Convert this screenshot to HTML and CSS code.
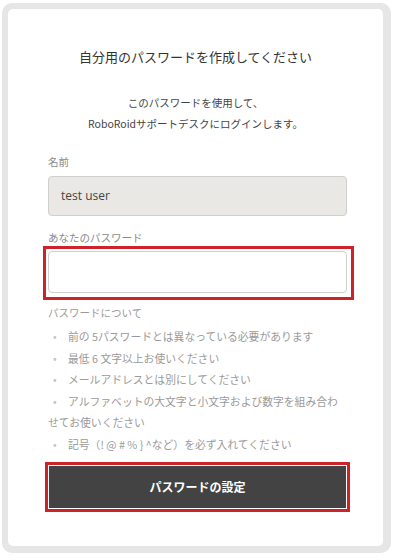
FILE: index.html
```html
<!DOCTYPE html>
<html lang="ja">
<head>
<meta charset="utf-8">
<link rel="stylesheet" href="styles.css">
</head>
<body>
<div class="frame">
  <div class="card">
    <h1 class="title">自分用のパスワードを作成してください</h1>
    <p class="lead">このパスワードを使用して、<br>RoboRoidサポートデスクにログインします。</p>
    <div class="form">
      <label class="label label-name">名前</label>
      <div class="input input-disabled">test user</div>
      <label class="label label-pass">あなたのパスワード</label>
      <div class="mark mark-input">
        <div class="input"></div>
      </div>
      <div class="label label-about">パスワードについて</div>
      <ul class="rules">
        <li>前の 5パスワードとは異なっている必要があります</li>
        <li>最低 6 文字以上お使いください</li>
        <li>メールアドレスとは別にしてください</li>
        <li>アルファベットの大文字と小文字および数字を組み合わせてお使いください</li>
        <li>記号（! @ # % } ^など）を必ず入れてください</li>
      </ul>
      <div class="mark mark-button">
        <button class="submit">パスワードの設定</button>
      </div>
    </div>
  </div>
</div>
</body>
</html>
```

FILE: styles.css
```css
html, body {
  margin: 0;
  padding: 0;
  background: #ffffff;
}
body {
  font-family: "Noto Sans CJK JP", "Noto Sans", sans-serif;
  width: 396px;
  height: 558px;
  overflow: hidden;
}
.frame {
  margin: 3px 0 0 2px;
  width: 389px;
  height: 550px;
  box-sizing: border-box;
  border: 6px solid #e6e6e6;
  border-right-width: 8px;
  border-bottom-width: 7px;
  border-radius: 10px;
  background: #e6e6e6;
}
.card {
  background: #ffffff;
  height: 100%;
  border-radius: 5px;
  box-sizing: border-box;
  padding: 38px 0 0 0;
}
.title {
  margin: 0;
  font-size: 13px;
  line-height: 20px;
  font-weight: normal;
  color: #333333;
  text-align: center;
}
.lead {
  margin: 25px 0 0 0;
  font-size: 10.5px;
  line-height: 21px;
  color: #444444;
  text-align: center;
}
.form {
  margin: 20px 0 0 40px;
  width: 299px;
}
.label {
  display: block;
  font-size: 10.5px;
  line-height: 16px;
  color: #8a8a8a;
}
.label-name {
  margin-bottom: 6px;
}
.label-pass {
  margin-top: 14px;
}
.label-about {
  margin-top: 5px;
  color: #9a9a9a;
}
.input {
  box-sizing: border-box;
  height: 40px;
  border: 1px solid #cfcfcf;
  border-radius: 4px;
  background: #ffffff;
}
.input-disabled {
  background: #e9e8e5;
  font-family: "Open Sans", sans-serif;
  font-size: 12px;
  color: #444444;
  line-height: 38px;
  padding-left: 12px;
}
.mark {
  border: 3px solid #cc2229;
  box-sizing: border-box;
}
.mark-input {
  margin-left: -5px;
  width: 311px;
  padding: 2px 4px 4px 2px;
}
.mark-input .input {
  height: 42px;
}
.rules {
  list-style: none;
  margin: 5px 0 0 0;
  padding: 0;
  font-size: 10.8px;
  line-height: 21.6px;
  color: #9a9a9a;
}
.rules li::before {
  content: "•";
  display: inline-block;
  width: 20px;
  padding-left: 5px;
  box-sizing: border-box;
  color: #c4c4c4;
}
.mark-button {
  margin: 6px 0 0 -3px;
  width: 305px;
  padding: 1px;
  background: #ffffff;
}
.submit {
  display: block;
  width: 100%;
  height: 42px;
  border: 0;
  margin: 0;
  background: #434343;
  color: #ffffff;
  font-family: "Noto Sans CJK JP", sans-serif;
  font-size: 12px;
  font-weight: bold;
}
```
